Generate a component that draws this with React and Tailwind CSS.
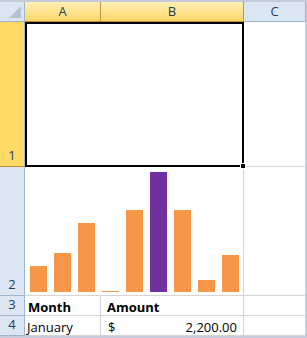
const bars = [
  { h: 26, c: "#f79646" },
  { h: 39, c: "#f79646" },
  { h: 69, c: "#f79646" },
  { h: 1, c: "#f79646" },
  { h: 82, c: "#f79646" },
  { h: 120, c: "#7030a0" },
  { h: 82, c: "#f79646" },
  { h: 12, c: "#f79646" },
  { h: 37, c: "#f79646" }
];

function ColHeader({ label, active, last }) {
  return <div
    className={
      active
        ? "flex items-center justify-center border-b border-r border-b-[#c28a30] border-r-[#c8964b] bg-gradient-to-b from-[#fff0b4] to-[#fdd667] text-[13px] text-[#27415f]"
        : "flex items-center justify-center border-b border-r border-[#9eb6ce] bg-[#dce6f2] text-[13px] text-[#27415f]" + (last ? "" : "")
    }
  >
      {label}
    </div>;
}

function RowHeader({ label, active }) {
  return <div
    className={
      active
        ? "flex items-end justify-center border-b border-r border-b-[#c28a30] border-r-[#9eb6ce] bg-[#fed966] pb-[1px] text-[13px] text-[#27415f]"
        : "flex items-end justify-center border-b border-r border-[#9eb6ce] bg-[#dce6f2] pb-[1px] text-[13px] text-[#27415f]"
    }
  >
      {label}
    </div>;
}

function Cell({ children, className = "" }) {
  return <div className={"border-b border-r border-[#d4d4d4] bg-white " + className}>{children}</div>;
}

export default function App() {
  return <div
    className="grid h-[338px] w-[307px] overflow-hidden bg-[#c3ccd8] font-['Open_Sans','Liberation_Sans',sans-serif]"
    style={{
      gridTemplateColumns: "25px 76px 143px 62px 1px",
      gridTemplateRows: "2px 20px 145px 129px 20px 20px 2px"
    }}
  >
      <div className="col-span-5 bg-[#c3ccd8]" />

      <div className="relative border-b border-r border-[#9eb6ce] bg-[#dce6f2]">
        <svg className="absolute bottom-[3px] right-[3px]" width="12" height="12" viewBox="0 0 12 12">
          <polygon points="12,0 12,12 0,12" fill="#b4c3d4" />
        </svg>
      </div>
      <ColHeader label="A" active />
      <ColHeader label="B" active />
      <ColHeader label="C" />
      <div className="bg-[#c3ccd8]" />

      <RowHeader label="1" active />
      <div className="relative col-span-2 border-2 border-black bg-white">
        <div className="absolute -bottom-[4px] -right-[4px] h-[6px] w-[6px] border border-white bg-black" />
      </div>
      <Cell />
      <div className="bg-[#c3ccd8]" />

      <RowHeader label="2" />
      <div className="col-span-2 border-b border-r border-[#d4d4d4] bg-white">
        <svg width="218" height="128" viewBox="0 0 218 128">
          {bars.map((bar, i) => <rect key={i} x={5 + i * 24} y={125 - bar.h} width="17" height={bar.h} fill={bar.c} />)}
        </svg>
      </div>
      <Cell />
      <div className="bg-[#c3ccd8]" />

      <RowHeader label="3" />
      <Cell className="flex items-end pb-[1px] pl-[3px] text-[13px] font-bold leading-none text-black">Month</Cell>
      <Cell className="flex items-end pb-[1px] pl-[6px] text-[13px] font-bold leading-none text-black">Amount</Cell>
      <Cell />
      <div className="bg-[#c3ccd8]" />

      <RowHeader label="4" />
      <Cell className="flex items-end pb-[1px] pl-[2px] text-[13px] leading-none text-black">January</Cell>
      <Cell className="flex items-end justify-between pb-[1px] pl-[7px] pr-[6px] text-[13px] leading-none text-black">
        <span>$</span>
        <span>2,200.00</span>
      </Cell>
      <Cell />
      <div className="bg-[#c3ccd8]" />

      <div className="col-span-5 bg-[#c3ccd8]" />
    </div>;
}
